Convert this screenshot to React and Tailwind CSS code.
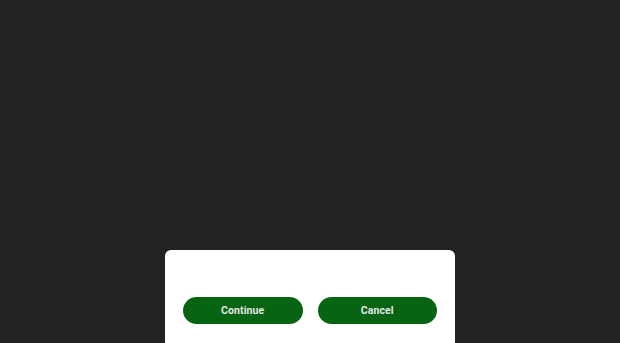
export default function App() {
  return (
    <div
      className="w-[620px] h-[343px] overflow-hidden bg-[#222222] flex justify-center pt-[250px]"
      style={{ fontFamily: "Roboto, 'Liberation Sans', sans-serif" }}
    >
      <div className="w-[290px] h-[140px] bg-white rounded-[6px] px-[18px] pt-[47px] shrink-0">
        <div className="flex gap-[15px]">
          <button className="w-[120px] h-[27px] rounded-full bg-[#076412] text-[#e6e6e6] text-[10.5px] font-bold tracking-[0.1px]">
            Continue
          </button>
          <button className="w-[120px] h-[27px] rounded-full bg-[#076412] text-[#e6e6e6] text-[10.5px] font-bold tracking-[0.1px]">
            Cancel
          </button>
        </div>
      </div>
    </div>
  );
}
